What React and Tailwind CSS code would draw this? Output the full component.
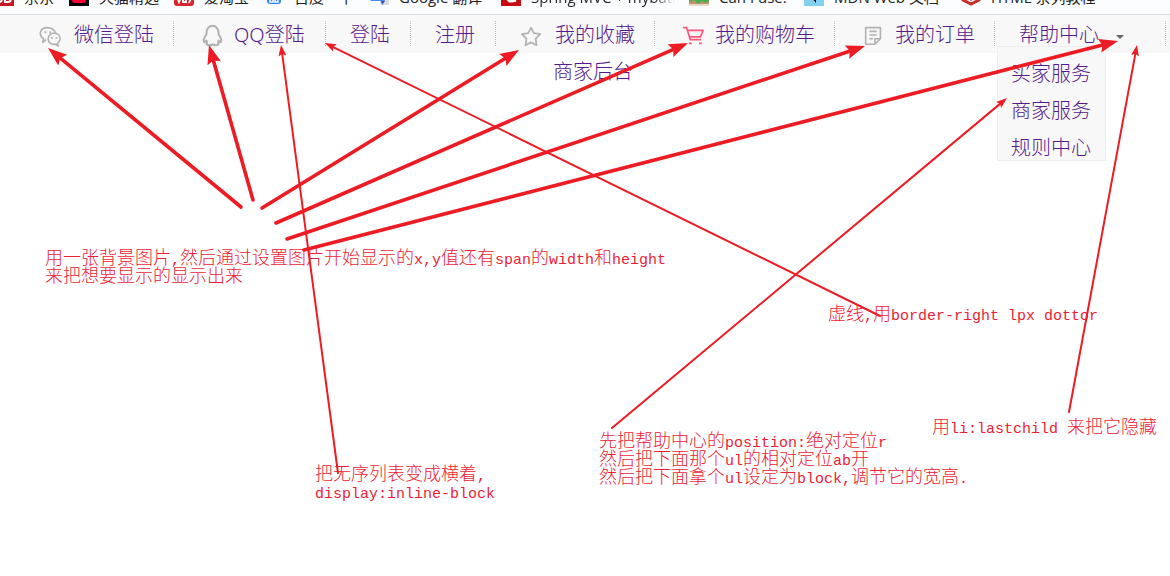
import React from "react";

const bookmarks = [
  { label: "京东", icon: "jd", width: "w-[75px]" },
  { label: "天猫精选", icon: "tmall", width: "w-[105px]" },
  { label: "爱淘宝", icon: "taobao", width: "w-[90px]" },
  { label: "百度一下", icon: "baidu", width: "w-[105px]" },
  { label: "Google 翻译", icon: "google", width: "w-[132px]" },
  { label: "Spring MVC + mybatis", icon: "csdn", width: "w-[188px]", fade: true },
  { label: "Can I use:", icon: "caniuse", width: "w-[115px]" },
  { label: "MDN Web 文档", icon: "mdn", width: "w-[157px]" },
  { label: "HTML 系列教程", icon: "html", width: "w-[160px]" },
];

function Favicon({ name }) {
  return (
    <svg width="20" height="20" viewBox="0 0 20 20" className="shrink-0" aria-hidden="true">
      {name === "jd" && (
        <>
          <rect width="20" height="20" fill="#c81623" />
          <path d="M8 8v5q0 3-3 3M11 8h3q3 0 3 4t-3 4h-3z" stroke="#fff" strokeWidth="2" fill="none" />
        </>
      )}
      {name === "tmall" && (
        <>
          <rect width="20" height="20" fill="#000" />
          <path d="M3 6h14v8q0 3-3 3H6q-3 0-3-3z" fill="#ff0036" />
        </>
      )}
      {name === "taobao" && (
        <>
          <rect width="20" height="20" rx="3" fill="#d8262d" />
          <path d="M3 11l2 5 2-5M9 10h3v6H9zM14 10h3v2l-2 5" stroke="#fff" strokeWidth="1.8" fill="none" />
        </>
      )}
      {name === "baidu" && (
        <>
          <rect x="3" y="3" width="14" height="15" rx="3" fill="#3385ff" />
          <path d="M6 12h3v4H6zM11 12h3v4h-3z" stroke="#fff" strokeWidth="1.5" fill="none" />
        </>
      )}
      {name === "google" && (
        <>
          <path d="M8 6h10q2 0 2 2v11h-8z" fill="#dcdcdc" />
          <path d="M1 2h10l5 13H3q-2 0-2-2z" fill="#4889f4" />
          <path d="M12 15h4l-3 4z" fill="#3452b4" />
        </>
      )}
      {name === "csdn" && (
        <>
          <rect width="20" height="20" fill="#c80a12" />
          <path d="M15 14q-9 3-8-3t9-3" stroke="#fff" strokeWidth="3" fill="none" />
        </>
      )}
      {name === "caniuse" && (
        <>
          <rect width="20" height="20" fill="#bd926d" />
          <path d="M0 8h20v7l-4 2-3-2-4 3-4-4-5 2z" fill="#4caf50" />
          <path d="M0 18h20v2H0z" fill="#e8d9c4" />
        </>
      )}
      {name === "mdn" && (
        <>
          <rect width="20" height="20" fill="#83d0f2" />
          <path d="M7 9l5 1v7l-3-4-3-1z" fill="#000" />
        </>
      )}
      {name === "html" && (
        <path d="M2 4v10l8 4 8-4V4M5 9l5 4 5-4" stroke="#c9302c" strokeWidth="3" fill="none" />
      )}
    </svg>
  );
}

const iconPaths = {
  wechat: (
    <>
      <path d="M8 17l-4 3 1-4C-1 12 1 4 9 4q7 0 9 6" />
      <path d="M10 16c0-8 13-8 13 0 0 3-2 4-3 5l1 3-3-2c-5 1-8-2-8-6z" />
      <path d="M7 8v2M12 8v2M14 14v2M19 14v2" strokeWidth="2" />
    </>
  ),
  qq: (
    <path d="M6 11C5-1 20-1 19 11c3 4 4 8 2 9l-2-2c-1 3-1 3 0 4-2 2-5 1-6 0-2 1-5 2-7 0 1-1 1-1 0-4l-2 2c-2-1-1-5 2-9z" strokeWidth="2.2" />
  ),
  star: (
    <path d="M12 4l3 6 7 1-5 5 1 7-6-3-6 3 1-7-5-5 7-1z" strokeWidth="1.9" />
  ),
  cart: (
    <>
      <path d="M1 4h4l4 13h12M6 7h17l-3 7H8" />
      <path d="M9 20v2M20 20v2" strokeWidth="3" />
    </>
  ),
  order: (
    <>
      <path d="M4 4h16v12l-6 6H4zM20 16h-6v6" />
      <path d="M8 8h8M8 12h8M8 16h4" />
    </>
  ),
};

function NavIcon({ name }) {
  return (
    <svg
      width="23"
      height="23"
      viewBox="0 0 25 25"
      fill="none"
      stroke={name === "cart" ? "#f9577c" : "#b2b2b2"}
      strokeWidth="1.8"
      strokeLinejoin="round"
      className="mt-1 shrink-0"
      aria-hidden="true"
    >
      {iconPaths[name]}
    </svg>
  );
}

const navItems = [
  { label: "微信登陆", icon: "wechat", box: "w-[135px] gap-3" },
  { label: "QQ登陆", icon: "qq", box: "w-[152px] gap-[10px] pl-[27px]" },
  { label: "登陆", box: "w-[85px] pl-6" },
  { label: "注册", box: "w-[85px] pl-6" },
  { label: "我的收藏", icon: "star", box: "w-[159px] gap-3 pl-6" },
  { label: "我的购物车", icon: "cart", box: "w-[180px] gap-[10px] pl-[27px]" },
  { label: "我的订单", icon: "order", box: "w-[160px] gap-[10px] pl-[27px]" },
  { label: "帮助中心", menu: true, box: "w-[171px] gap-[17px] pl-6" },
];

const helpLinks = ["买家服务", "商家服务", "规则中心"];

function NavItem({ item }) {
  return (
    <li className={`relative flex h-[25px] shrink-0 items-center border-r border-dotted border-[#bbb] ${item.box}`}>
      {item.icon && <NavIcon name={item.icon} />}
      <a href="#" className="pt-[2px] whitespace-nowrap">{item.label}</a>
      {item.menu && (
        <>
          <svg width="8" height="5" viewBox="0 0 8 5" className="mt-2" aria-hidden="true">
            <path d="M0 0h8L4 4z" fill="#666" />
          </svg>
          <ul className="absolute top-[25px] left-[2px] w-[109px] border border-[#eee] bg-[#f8f8f8] pt-2 pl-[13px]">
            {helpLinks.map((label) => (
              <li key={label} className="h-[37px] leading-[37px] last:h-[31px]">
                <a href="#">{label}</a>
              </li>
            ))}
          </ul>
        </>
      )}
    </li>
  );
}

const notes = [
  { place: "left-[45px] top-[250px]", lines: ["用一张背景图片,然后通过设置图片开始显示的x,y值还有span的width和height", "来把想要显示的显示出来"] },
  { place: "left-[828px] top-[306px]", lines: ["虚线,用border-right lpx dottor"] },
  { place: "left-[932px] top-[419px]", lines: ["用li:lastchild 来把它隐藏"] },
  { place: "left-[599px] top-[433px]", lines: ["先把帮助中心的position:绝对定位r", "然后把下面那个ul的相对定位ab开", "然后把下面拿个ul设定为block,调节它的宽高."] },
  { place: "left-[315px] top-[466px]", lines: ["把无序列表变成横着,", "display:inline-block"] },
];

function NoteLine({ text }) {
  return (
    <span className="block h-[18px] whitespace-pre">
      {text.split(/([\x20-\x7e]+)/).map((run, i) =>
        i % 2 ? <span key={i} className="text-[15px]">{run}</span> : run
      )}
    </span>
  );
}

// Each arrow runs from its tail (x1, y1) to its tip (x2, y2).
const arrows = [
  [241, 207, 48, 48, true],
  [253, 200, 209, 45, true],
  [262, 208, 519, 50, true],
  [276, 223, 688, 43, true],
  [287, 239, 865, 46, true],
  [304, 250, 1118, 41, true],
  [338, 473, 281, 45, false],
  [880, 316, 325, 43, false],
  [612, 428, 1007, 98, false],
  [1069, 412, 1137, 45, false],
];

function Arrow({ points: [x1, y1, x2, y2, bold] }) {
  const length = Math.hypot(x2 - x1, y2 - y1);
  const angle = (Math.atan2(y2 - y1, x2 - x1) * 180) / Math.PI;
  const head = bold ? "M0 0L-19-7L-16 0L-19 7Z" : "M0 0L-11-4L-9 0L-11 4Z";
  return (
    <g transform={`translate(${x2} ${y2}) rotate(${angle})`}>
      <path d={`M${-length} 0H${bold ? -14 : -8}`} stroke="#ed1c24" strokeWidth={bold ? 3.6 : 2} strokeLinecap="round" />
      <path d={head} fill="#ed1c24" />
    </g>
  );
}

export default function App() {
  return (
    <div className="relative min-h-screen overflow-hidden bg-white font-['Noto_Sans','Noto_Sans_CJK_SC',sans-serif]">
      <div className="h-[15px] overflow-hidden border-b border-[#dadce0] bg-[#fbfdff]">
        <nav aria-label="书签" className="-mt-[14px] -ml-[6px] flex h-5 items-center font-['Open_Sans','Noto_Sans_CJK_SC',sans-serif] text-[15px] text-[#222]">
          {bookmarks.map((b) => (
            <a key={b.label} href="#" className={`flex shrink-0 items-center gap-[10px] ${b.width}`}>
              <Favicon name={b.icon} />
              <span className={b.fade ? "w-[144px] overflow-hidden bg-linear-to-r from-[#222] from-85% to-transparent bg-clip-text pt-[3px] whitespace-nowrap text-transparent" : "pt-[3px] whitespace-nowrap"}>
                {b.label}
              </span>
            </a>
          ))}
        </nav>
      </div>
      <header className="h-[38px] bg-[#f8f8f8] pt-[6px] text-[20px] font-light text-[#551a8b]">
        <ul className="flex pl-[39px]">
          {navItems.map((item) => <NavItem key={item.label} item={item} />)}
        </ul>
        <div className="mt-[11px] pl-[553px] leading-[30px]">
          <a href="#">商家后台</a>
        </div>
      </header>
      {notes.map((note) => (
        <p key={note.lines[0]} className={`absolute font-['Liberation_Mono','Noto_Sans_CJK_SC',monospace] text-[18px] leading-[18px] font-light text-[#ed1c34] ${note.place}`}>
          {note.lines.map((line) => <NoteLine key={line} text={line} />)}
        </p>
      ))}
      <svg width="1170" height="576" className="pointer-events-none absolute top-0 left-0" aria-hidden="true">
        {arrows.map((points) => <Arrow key={points.join()} points={points} />)}
      </svg>
    </div>
  );
}
